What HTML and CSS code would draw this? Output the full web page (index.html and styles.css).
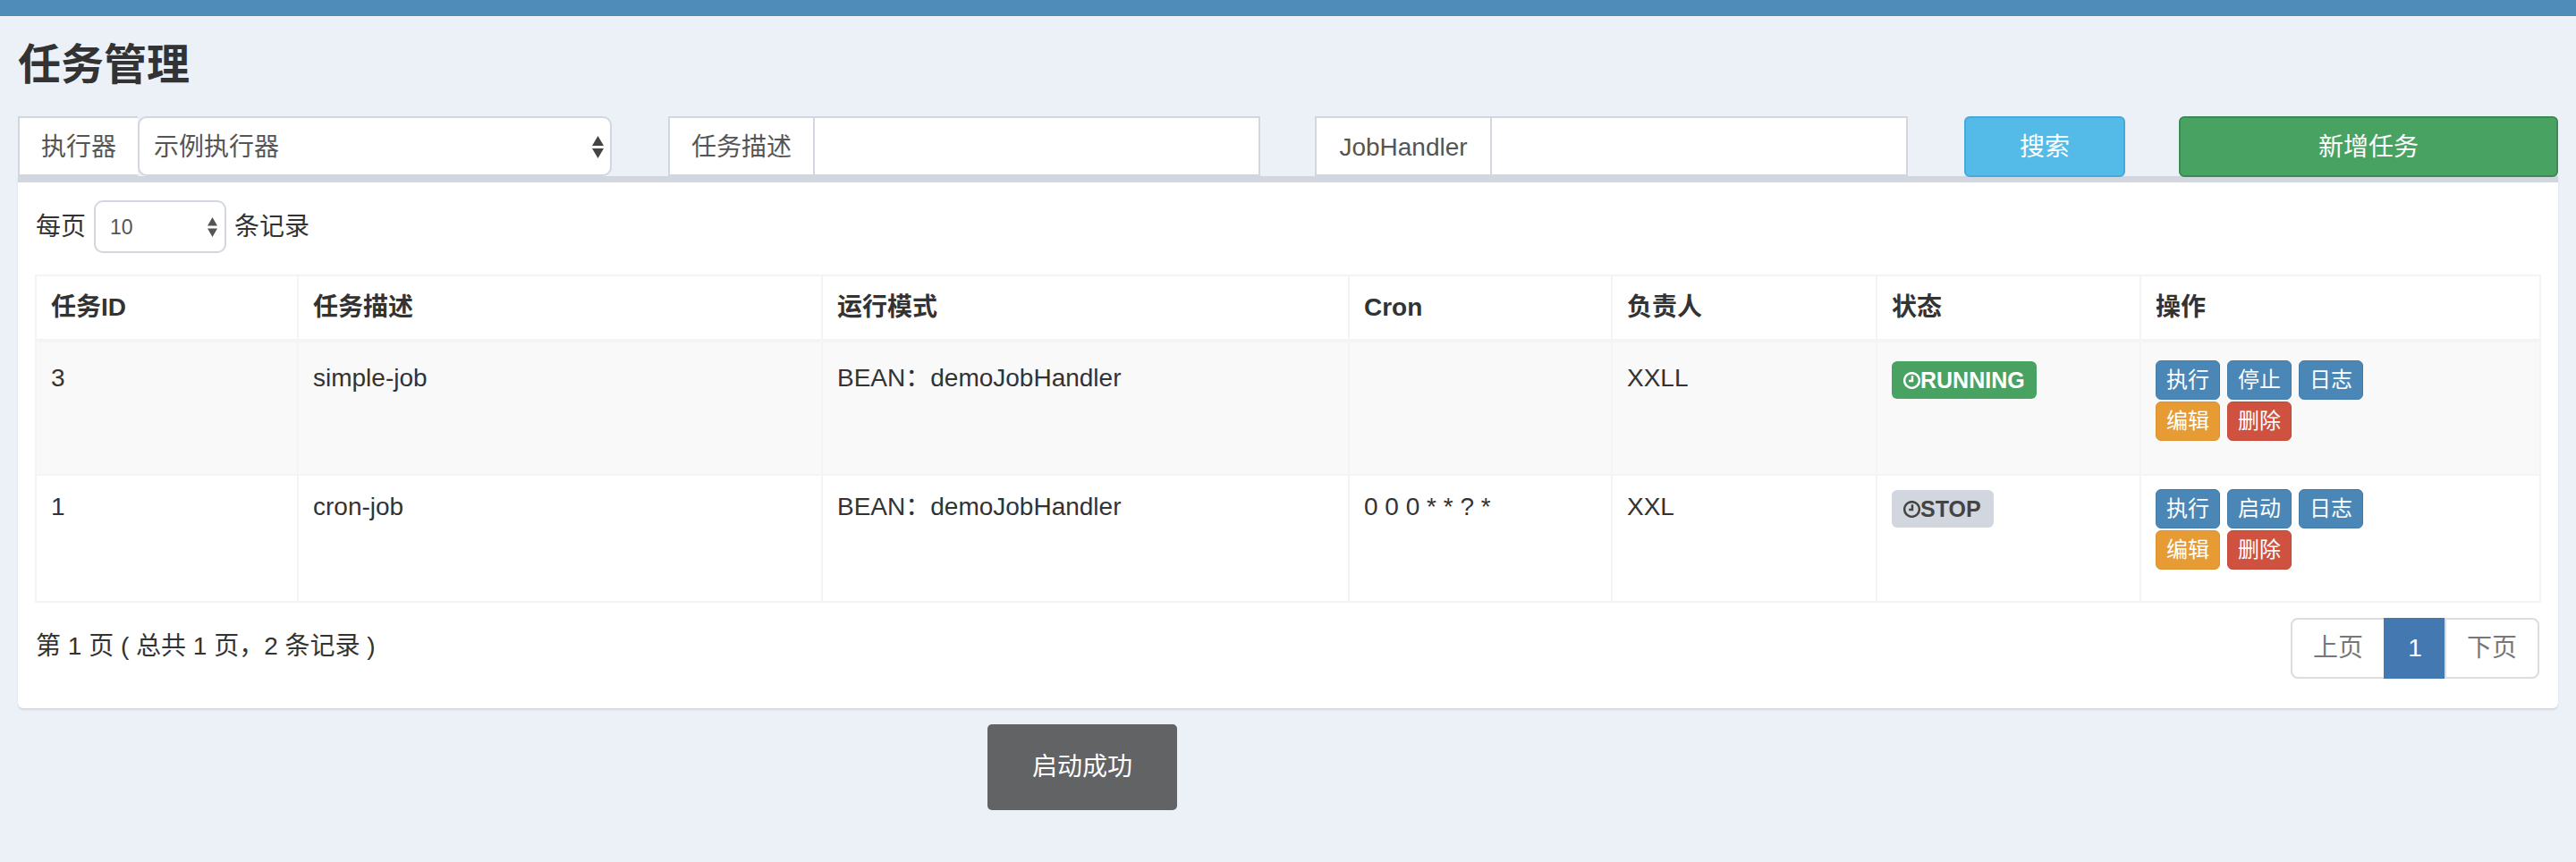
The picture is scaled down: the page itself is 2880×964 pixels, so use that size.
FILE: index.html
```html
<!DOCTYPE html>
<html lang="zh-CN">
<head>
<meta charset="utf-8">
<title>任务管理</title>
<link rel="stylesheet" href="styles.css">
</head>
<body>
<header class="topbar"></header>
<main class="content">
  <h1 class="page-title">任务管理</h1>
  <div class="filters">
    <div class="group group-exec">
      <span class="addon">执行器</span>
      <span class="select select-wide">示例执行器
        <svg class="arrows" width="13" height="25" viewBox="0 0 13 25"><path d="M6.5 0 13 11H0zM6.5 25 0 14h13z"/></svg>
      </span>
    </div>
    <div class="group group-desc">
      <span class="addon">任务描述</span>
      <span class="input"></span>
    </div>
    <div class="group group-handler">
      <span class="addon">JobHandler</span>
      <span class="input"></span>
    </div>
    <button class="btn-search">搜索</button>
    <button class="btn-add">新增任务</button>
  </div>
  <section class="panel">
    <div class="length">
      <span>每页</span>
      <span class="select select-small">10
        <svg class="arrows" width="11" height="22" viewBox="0 0 11 22"><path d="M5.5 0 11 9.5H0zM5.5 22 0 12.5h11z"/></svg>
      </span>
      <span>条记录</span>
    </div>
    <table class="jobs">
      <colgroup>
        <col class="c1"><col class="c2"><col class="c3"><col class="c4"><col class="c5"><col class="c6"><col class="c7">
      </colgroup>
      <thead>
        <tr><th>任务ID</th><th>任务描述</th><th>运行模式</th><th>Cron</th><th>负责人</th><th>状态</th><th>操作</th></tr>
      </thead>
      <tbody>
        <tr class="odd">
          <td>3</td><td>simple-job</td><td>BEAN：demoJobHandler</td><td></td><td>XXLL</td>
          <td><span class="badge badge-run"><svg class="clock" width="19" height="19" viewBox="1 1 20 20"><circle cx="11" cy="11" r="8.8"/><path d="M11.5 5.5v6H7.5"/></svg>RUNNING</span></td>
          <td class="ops">
            <div class="ops-row"><span class="mini blue">执行</span><span class="mini blue">停止</span><span class="mini blue">日志</span></div>
            <div class="ops-row"><span class="mini orange">编辑</span><span class="mini red">删除</span></div>
          </td>
        </tr>
        <tr class="even">
          <td>1</td><td>cron-job</td><td>BEAN：demoJobHandler</td><td>0 0 0 * * ? *</td><td>XXL</td>
          <td><span class="badge badge-stop"><svg class="clock" width="19" height="19" viewBox="1 1 20 20"><circle cx="11" cy="11" r="8.8"/><path d="M11.5 5.5v6H7.5"/></svg>STOP</span></td>
          <td class="ops">
            <div class="ops-row"><span class="mini blue">执行</span><span class="mini blue">启动</span><span class="mini blue">日志</span></div>
            <div class="ops-row"><span class="mini orange">编辑</span><span class="mini red">删除</span></div>
          </td>
        </tr>
      </tbody>
    </table>
    <div class="footer">
      <span class="info">第 1 页 ( 总共 1 页，2 条记录 )</span>
      <nav class="pager">
        <span class="page">上页</span><span class="page active">1</span><span class="page">下页</span>
      </nav>
    </div>
  </section>
</main>
<div class="toast">启动成功</div>
</body>
</html>
```
FILE: styles.css
```css
* { box-sizing: border-box; }
html, body { margin: 0; padding: 0; }
body {
  background: #ecf0f7;
  color: #333;
  font-family: "Liberation Sans", "Noto Sans CJK SC", sans-serif;
  font-size: 28px;
  line-height: 40px;
  height: 964px;
  overflow: hidden;
}
.topbar { height: 18px; background: #508cb9; }
.content { padding: 0 20px; }
.page-title {
  margin: 0;
  padding-top: 25px;
  height: 112px;
  font-size: 48px;
  line-height: 60px;
  font-weight: 700;
  color: #333;
}
.filters { display: flex; height: 68px; }
.group { display: flex; height: 67px; }
.group-exec { width: 664px; }
.group-desc { width: 662px; margin-left: 63px; }
.group-handler { width: 663px; margin-left: 61px; }
.addon {
  flex: none;
  display: flex;
  align-items: center;
  justify-content: center;
  padding-top: 2px;
  background: #fff;
  color: #555;
  border: 2px solid #d2d6de;
  border-right: 0;
}
.group-exec .addon { width: 134px; }
.group-desc .addon { width: 162px; }
.group-handler .addon { width: 196px; }
.input { flex: 1; background: #fff; border: 2px solid #d2d6de; }
.select {
  position: relative;
  display: flex;
  align-items: center;
  background: #fff;
  color: #555;
  border: 2px solid #d2d6de;
  border-radius: 10px;
}
.select-wide { flex: 1; padding: 2px 0 0 16px; }
.select-wide .arrows { position: absolute; right: 7px; top: 20px; fill: #444; }
.select-small {
  width: 148px;
  height: 59px;
  padding-left: 16px;
  font-size: 23px;
}
.select-small .arrows { position: absolute; right: 8px; top: 17px; fill: #555; }
.btn-search, .btn-add {
  height: 68px;
  padding: 2px 0 0;
  border-radius: 6px;
  color: #fff;
  font: inherit;
}
.btn-search {
  width: 180px;
  margin-left: 63px;
  background: #54bbe9;
  border: 2px solid #46a9d9;
}
.btn-add {
  width: 424px;
  margin-left: 60px;
  background: #48a363;
  border: 2px solid #3c8a53;
}
.panel {
  height: 595px;
  margin-top: -1px;
  padding: 20px 20px 0;
  background: #fff;
  border-top: 7px solid #d2d6de;
  border-radius: 0 0 6px 6px;
  box-shadow: 0 2px 2px rgba(0, 0, 0, .1);
}
.length { display: flex; align-items: center; height: 59px; gap: 9px; }
.jobs {
  width: 2800px;
  margin: 24px 0 0 -1px;
  table-layout: fixed;
  border-collapse: collapse;
  border: 2px solid #f4f4f4;
}
.c1 { width: 293px; }
.c2 { width: 586px; }
.c3 { width: 589px; }
.c4 { width: 294px; }
.c5 { width: 296px; }
.c6 { width: 295px; }
.c7 { width: 447px; }
.jobs th, .jobs td {
  border: 2px solid #f4f4f4;
  padding: 0 16px;
  text-align: left;
  vertical-align: top;
}
.jobs th { height: 73px; vertical-align: middle; font-weight: 700; border-bottom-width: 4px; }
.odd td { height: 150px; padding-top: 20px; background: #f9f9f9; }
.even td { height: 142px; padding-top: 15px; background: #fff; }
.badge {
  display: flex;
  align-items: center;
  height: 42px;
  margin-top: 1px;
  padding-left: 13px;
  border-radius: 6px;
  font-size: 25px;
  font-weight: 700;
  line-height: 42px;
}
.badge-run { width: 162px; background: #48a363; color: #fff; }
.badge-stop { width: 114px; background: #d2d6de; color: #444; }
.clock { flex: none; fill: none; stroke: currentColor; stroke-width: 2.6; }
.ops-row { display: flex; gap: 8px; margin-bottom: 2px; }
.mini {
  display: flex;
  align-items: center;
  justify-content: center;
  width: 72px;
  height: 44px;
  border-radius: 6px;
  color: #fff;
  font-size: 24px;
  line-height: 44px;
}
.blue { background: #4a86b6; border: 1px solid #437ba8; }
.orange { background: #e69b35; border: 1px solid #dc9230; }
.red { background: #cf5240; border: 1px solid #c4493a; }
.footer {
  display: flex;
  justify-content: space-between;
  align-items: flex-start;
  margin-top: 17px;
}
.info { margin-top: 12px; }
.pager { display: flex; height: 68px; margin-right: 1px; }
.page {
  display: flex;
  align-items: center;
  justify-content: center;
  width: 106px;
  background: #fff;
  color: #777;
  border: 2px solid #ddd;
  margin-left: -2px;
}
.page:first-child { border-radius: 8px 0 0 8px; margin-left: 0; }
.page:last-child { border-radius: 0 8px 8px 0; }
.page.active {
  width: 70px;
  background: #4379b0;
  border-color: #4379b0;
  color: #fff;
}
.toast {
  position: fixed;
  left: 1104px;
  top: 810px;
  width: 212px;
  height: 96px;
  display: flex;
  align-items: center;
  justify-content: center;
  background: #616365;
  color: #fff;
  border-radius: 5px;
}
```
